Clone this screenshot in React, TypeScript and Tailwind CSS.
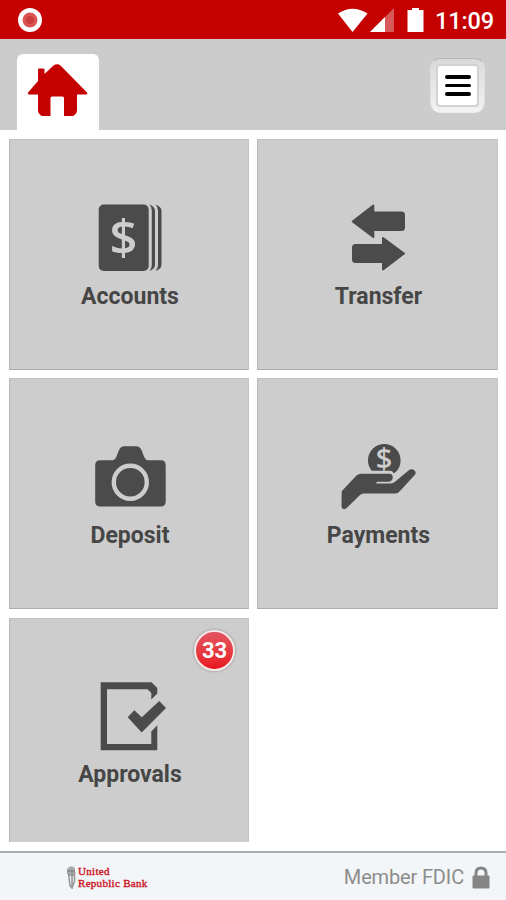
import React from 'react';

const IconHome = () => (
   <svg className="h-[54px] w-[62px]" viewBox="0 0 62 54" fill="#c40000">
      <path d="M11 18V6.500Q11 5.500 12 5.500H16Q17.500 5.500 17.500 6.500V11L26.500 2.600Q30 -0.300 33.500 2.600L60 29.500Q61 31.500 59 31.500H50V47.500Q50 50 48 51.500Q47 53 45 53H37V35Q37 33.500 35.500 33.500H25Q23.500 33.500 23.500 35V53H16Q14 53 13 51.500Q11 50 11 47.500V31.500H2Q0 31 1.500 29Z" />
   </svg>
);

const IconAccounts = () => (
   <svg className="size-20" viewBox="0 0 80 80">
      <rect x="9.700" y="4.500" width="50" height="66.500" rx="5" fill="#4b4b4b" />
      <path d="M60.500 4.500Q66 6.500 66 11V64.500Q66 69 60.500 71Q62.800 68.500 62.800 65V10.500Q62.800 7 60.500 4.500Z" fill="#4b4b4b" />
      <path d="M66.500 4.500Q72.500 6.500 72.500 11V64.500Q72.500 69 66.500 71Q69 68.500 69 65V10.500Q69 7 66.500 4.500Z" fill="#4b4b4b" />
      <text x="34.500" y="55" textAnchor="middle" fill="#cdcdcd" fontSize="49" className="font-['Open_Sans',sans-serif] font-semibold">
         $
      </text>
   </svg>
);

const IconTransfer = () => (
   <svg className="size-20" viewBox="0 0 80 80" fill="#4b4b4b" stroke="#4b4b4b" strokeWidth="2" strokeLinejoin="round">
      <path d="M14.700 21.500L35.300 5.500V12.500H63.500Q66 12.500 66 15V27.500Q66 30 63.500 30H35.300V37Z" />
      <path d="M66 53.500L45 69.500V62H17.500Q15 62 15 59.500V47.500Q15 45 17.500 45H45V38Z" />
   </svg>
);

const IconDeposit = () => (
   <svg className="size-20" viewBox="0 0 80 80">
      <path
         d="M11 21.200H24Q26.500 20.500 27.500 17.500L30 11Q31.500 7.200 35.500 7.200H47Q51 7.200 52.500 11L55 17.500Q56.500 21.200 59 21.200H72Q76.700 21.200 76.700 26.500V62.500Q76.700 67.500 71.500 67.500H11.500Q6.200 67.500 6.200 62.500V26.500Q6.200 21.200 11 21.200Z"
         fill="#4b4b4b"
      />
      <circle cx="41.300" cy="43.200" r="16.500" fill="none" stroke="#cdcdcd" strokeWidth="4.400" />
   </svg>
);

const IconPayments = () => (
   <svg className="size-20" viewBox="0 -0.500 80 80" fill="#4b4b4b">
      <path d="M33.700 31.200A16.300 16.300 0 1 1 57.800 32.400L55.500 34Q55 31.200 52 31.200Z" />
      <text x="46" y="29.500" textAnchor="middle" fill="#cdcdcd" fontSize="29" className="font-['Open_Sans',sans-serif] font-semibold">
         $
      </text>
      <path d="M3.700 51.700L18.500 36Q20.500 34.300 23 34.300H51.500Q55 34.500 54.700 38.300Q54.300 42 51 42.200H39L38 44H52.500Q55 44 57 42.300L70.500 31Q73.500 29 76 30.500Q79 33 76.700 35.500L62 51.500Q60 54 57 54H25.500Q23.500 54 22 55.500L8.700 68.500Q6.500 70.500 4.500 69Q3.500 68.500 3.500 66.500Z" />
   </svg>
);

const IconApprovals = () => (
   <svg className="size-20" viewBox="0 0 80 80" fill="#4b4b4b">
      <path d="M11.700 3.300H62.500L68.300 9V14.500L62.300 20.500V14L58.500 10.300H18V65H62.300V52.500L68.300 46.300V71.300H11.700Z" />
      <path d="M38.700 38.300L45.300 31.200L52.800 38.300L70.300 22L77 29L52.700 53.400Z" />
   </svg>
);

const tiles = [
   { title: 'Accounts', icon: <IconAccounts /> },
   { title: 'Transfer', icon: <IconTransfer /> },
   { title: 'Deposit', icon: <IconDeposit /> },
   { title: 'Payments', icon: <IconPayments /> },
   { title: 'Approvals', icon: <IconApprovals />, badge: 33 },
];

const StatusBar = () => (
   <div className="flex h-[39px] shrink-0 items-center justify-between bg-[#c40000] pl-[18px] pr-3">
      <svg className="mt-px size-6" viewBox="0 0 24 24">
         <circle cx="12" cy="12" r="12" fill="#fff" />
         <circle cx="12" cy="12" r="7.500" fill="#dc5555" />
         <circle cx="12" cy="12" r="4" fill="#cc3c3c" />
      </svg>
      <div className="flex items-center">
         <svg className="mt-px h-6 w-[90px]" viewBox="0 0 90 24" fill="#fff">
            <path d="M1 5.500Q15.500 -4 30.500 5.500L15.500 24Z" />
            <path d="M33 24L57 0V24Z" fillOpacity=".35" />
            <path d="M33 24L48 9V24Z" />
            <path d="M75 0H82V2H86.500V24H70.500V2H75Z" />
         </svg>
         <span className="ml-[8px] mt-1 w-[59px] whitespace-nowrap text-[23.500px] font-medium leading-none tracking-[-0.150px] text-white">
            11:09
         </span>
      </div>
   </div>
);

const Header = () => (
   <header className="flex h-[91px] shrink-0 items-end justify-between bg-[#cccccc] pl-[17px] pr-[21px]">
      <a href="#" className="flex h-[76px] w-[82px] justify-center rounded-t-[6px] bg-white pt-[9px]">
         <IconHome />
      </a>
      <button
         type="button"
         className="mb-[17px] flex h-[55px] w-[55px] items-center justify-center rounded-[10px] border border-t-[#b5b5b5] border-x-[#dedede] border-b-[#eeeeee] bg-linear-to-b from-[#dadada] to-[#f3f3f3]"
      >
         <span className="flex h-[43px] w-[43px] flex-col items-center justify-center gap-[5px] rounded-[4px] border-2 border-[#d2d2d2] bg-white">
            <span className="h-[3.500px] w-[26px] rounded-full bg-black" />
            <span className="h-[3.500px] w-[26px] rounded-full bg-black" />
            <span className="h-[3.500px] w-[26px] rounded-full bg-black" />
         </span>
      </button>
   </header>
);

const Footer = () => (
   <footer className="flex h-[49px] shrink-0 items-center justify-between border-t-2 border-[#a9abad] bg-[#f3f6f8] pl-[66px] pr-4">
      <div className="flex items-center">
         <svg className="h-6 w-[11px]" viewBox="0 0 11 24" fill="none">
            <path d="M1 4Q5 -1 9 3V9H1Z" fill="#aaa" />
            <path d="M2.500 8L4 21L6 23V5M8.500 7V16L6 23" stroke="#999" strokeWidth="1.600" />
            <path d="M1 6H9M2 10H8" stroke="#777" />
         </svg>
         <div className="ml-px w-[72px] whitespace-nowrap font-['Liberation_Serif',serif] text-[11px] leading-[12px] tracking-[0.300px] text-[#cc1728] [-webkit-text-stroke:0.400px_#cc1728]">
            <div>United</div>
            <div>Republic Bank</div>
         </div>
      </div>
      <div className="mt-px flex items-center">
         <span className="text-[20px] leading-none tracking-[-0.150px] text-[#8c8c8c]">Member FDIC</span>
         <svg className="ml-2 h-[23px] w-[18px]" viewBox="0 0 18 23">
            <path d="M4 11V7Q4 2 9 2Q14 2 14 7V11" fill="none" stroke="#858585" strokeWidth="3" />
            <rect x="0.500" y="9.500" width="17" height="13" rx="1" fill="#858585" />
         </svg>
      </div>
   </footer>
);

const App = () => {
   return (
      <div className="flex h-[900px] w-[506px] flex-col overflow-hidden bg-white font-[Roboto,sans-serif]">
         <StatusBar />
         <Header />
         <main className="grid h-[712px] shrink-0 grid-cols-[240px_241px] content-start gap-x-2 gap-y-[8.400px] overflow-hidden pl-[9px] pt-[9px]">
            {tiles.map((tile) => (
               <a
                  key={tile.title}
                  href="#"
                  className="relative flex h-[231px] flex-col items-center border border-t-[#c2c2c2] border-r-[#c4c4c4] border-b-[#acacac] border-l-[#b6b6b6] bg-[#cdcdcd] pt-[60px]"
               >
                  {tile.icon}
                  <span className="ml-0.5 mt-[2.500px] text-[23px] font-bold leading-7 text-[#464646]">{tile.title}</span>
                  {tile.badge && (
                     <span className="absolute right-[13px] top-[11px] flex size-[41px] items-center justify-center rounded-full border-2 border-[#f7e8e8] bg-linear-to-b from-[#e25460] to-[#e90f1c] text-[22px] font-bold text-white shadow-[0_0_2px_1px_#aaaaaa]">
                        {tile.badge}
                     </span>
                  )}
               </a>
            ))}
         </main>
         <div className="h-[9px] shrink-0 bg-white" />
         <Footer />
      </div>
   );
};

export default App;
